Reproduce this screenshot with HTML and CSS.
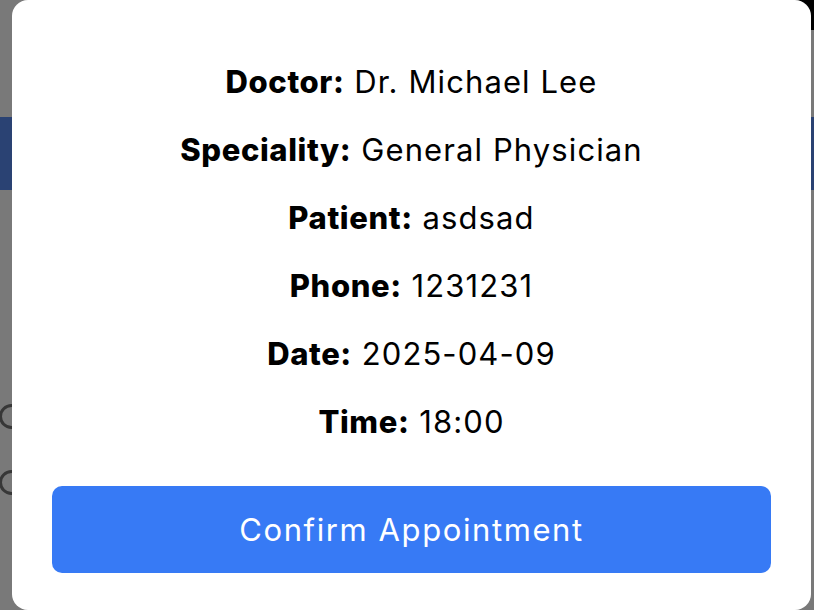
FILE: index.html
```html
<!DOCTYPE html>
<html>
<head>
<meta charset="utf-8">
<link rel="stylesheet" href="styles.css">
</head>
<body>
<div class="page">
  <div class="page-top"></div>
  <div class="page-bar"></div>
  <div class="page-body">
    <div class="ring"></div>
    <div class="ring"></div>
  </div>
</div>
<div class="overlay"></div>
<div class="corner-dark"></div>
<div class="modal">
  <div class="details">
    <p class="row"><b>Doctor:</b> Dr. Michael Lee</p>
    <p class="row"><b>Speciality:</b> General Physician</p>
    <p class="row"><b>Patient:</b> asdsad</p>
    <p class="row"><b>Phone:</b> 1231231</p>
    <p class="row"><b>Date:</b> 2025-04-09</p>
    <p class="row"><b>Time:</b> 18:00</p>
  </div>
  <button class="confirm">Confirm Appointment</button>
</div>
</body>
</html>
```
FILE: styles.css
```css
* { box-sizing: border-box; }
html, body { margin: 0; padding: 0; }
body {
  width: 814px;
  height: 610px;
  overflow: hidden;
  position: relative;
  background: #f2f2f2;
  font-family: "Inter", "Liberation Sans", sans-serif;
}
.page { display: flex; flex-direction: column; }
.page-top { height: 117px; }
.page-bar { height: 73px; background: #5584e6; }
.page-body { padding: 214px 0 0 0; display: flex; flex-direction: column; gap: 41px; margin-left: -1px; }
.ring { width: 25px; height: 25px; border: 3px solid #6e6e6e; border-radius: 50%; }
.overlay { position: absolute; inset: 0; background: rgba(0,0,0,0.5); }
.corner-dark { position: absolute; top: 0; right: 0; width: 30px; height: 30px; background: #000; }
.modal {
  position: absolute;
  left: 12px;
  top: 0;
  width: 799px;
  height: 610px;
  background: #fff;
  border-radius: 16px;
  padding: 62px 40px 37px;
  display: flex;
  flex-direction: column;
}
.details { display: flex; flex-direction: column; gap: 28px; }
.row {
  margin: 0;
  text-align: center;
  font-size: 31px;
  line-height: 40px;
  color: #000;
  letter-spacing: 1.1px;
}
.row b { font-weight: 800; letter-spacing: 0.6px; }
.confirm {
  margin-top: 44px;
  height: 87px;
  width: 100%;
  border: 0;
  border-radius: 10px;
  background: #377af5;
  color: #fff;
  font-family: inherit;
  font-size: 31px;
  letter-spacing: 1.6px;
}
```
